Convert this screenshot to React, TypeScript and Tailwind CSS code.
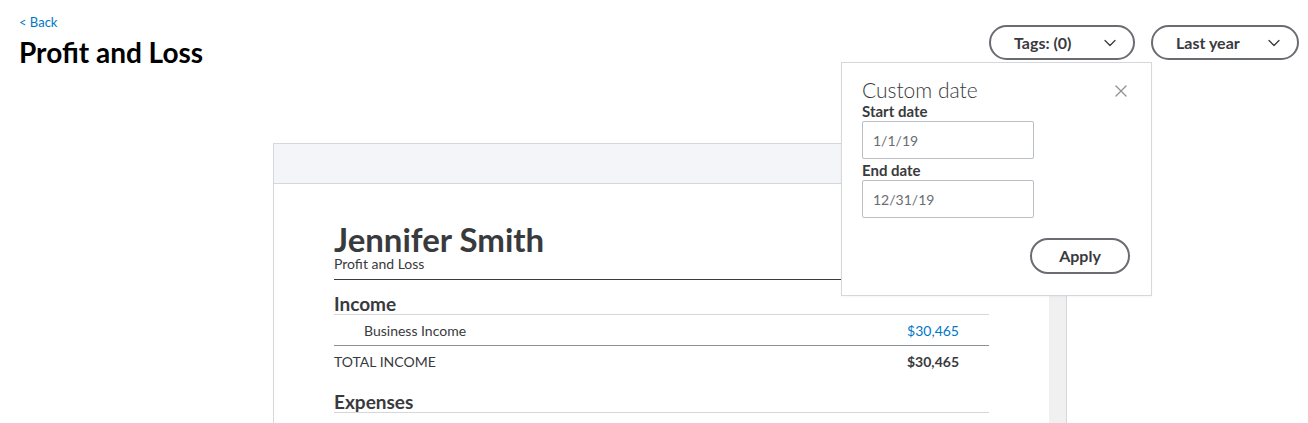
import { ChevronDown, X } from 'lucide-react'

const font = { fontFamily: 'Lato, "Noto Sans", sans-serif' }

function PillButton({ label, width }: { label: string; width: string }) {
  return (
    <button
      className={`flex h-[35px] items-center justify-between rounded-full border-2 border-[#6b6c72] bg-white pl-[23px] pr-[13px] text-[16px] font-bold text-[#393a3d] ${width}`}
    >
      <span>{label}</span>
      <ChevronDown size={20} strokeWidth={1.5} className="text-[#393a3d]" />
    </button>
  )
}

function Row({ label, amount, indent, total }: { label: string; amount: string; indent?: boolean; total?: boolean }) {
  return (
    <div className="flex h-[30px] items-center justify-between pr-[30px] text-[14px]">
      <span className={`${indent ? 'pl-[30px]' : ''} text-[#393a3d]`}>{label}</span>
      <span className={total ? 'font-bold text-[#393a3d]' : 'text-[#0077c5]'}>{amount}</span>
    </div>
  )
}

export default function App() {
  return (
    <div className="relative h-[423px] w-[1308px] overflow-hidden bg-white" style={font}>
      {/* header */}
      <div className="flex items-start justify-between pl-[19px] pr-[9px] pt-[13px]">
        <div>
          <a className="block text-[13px] leading-[18px] text-[#0077c5]">&lt; Back</a>
          <h1 className="mt-[4px] text-[28px] font-bold leading-[34px] text-black">Profit and Loss</h1>
        </div>
        <div className="mt-[12px] flex gap-[16px]">
          <PillButton label="Tags: (0)" width="w-[146px]" />
          <PillButton label="Last year" width="w-[148px]" />
        </div>
      </div>

      {/* report card */}
      <div className="ml-[273px] mt-[74px] w-[794px] border border-[#d4d7dc]">
        <div className="h-[40px] border-b border-[#d4d7dc] bg-[#f4f5f8]" />
        <div className="flex">
          <div className="flex-1 px-[60px] pt-[37px]">
            <div className="text-[33px] font-bold leading-[36px] text-[#393a3d]">Jennifer Smith</div>
            <div className="flex items-end justify-between border-b border-[#393a3d] pb-[8px] text-[14px] leading-[14px] text-[#393a3d]">
              <span>Profit and Loss</span>
              <span>Jan 01 - Dec 31, 2019</span>
            </div>
            <div className="mt-[14px] border-b border-[#d4d7dc] text-[19px] font-bold leading-[20px] text-[#393a3d]">Income</div>
            <div className="border-b border-[#8d9096]">
              <Row label="Business Income" amount="$30,465" indent />
            </div>
            <Row label="TOTAL INCOME" amount="$30,465" total />
            <div className="mt-[16px] border-b border-[#d4d7dc] text-[19px] font-bold leading-[20px] text-[#393a3d]">Expenses</div>
            <Row label="Advertising" amount="$400" indent />
          </div>
          <div className="w-[17px] bg-[#f0f0f0]" />
        </div>
      </div>

      {/* custom date popover */}
      <div className="absolute left-[841px] top-[62px] h-[234px] w-[311px] border border-[#d4d7dc] bg-white px-[20px] pt-[15px] shadow-[0_1px_2px_rgba(0,0,0,0.04)]">
        <div className="flex items-start justify-between">
          <div className="text-[21px] font-light leading-[24px] text-[#393a3d]">Custom date</div>
          <X size={20} strokeWidth={1.5} className="mt-[3px] text-[#8d9096]" />
        </div>
        <label className="block text-[15px] font-bold leading-[18px] text-[#393a3d]">Start date</label>
        <div className="mt-[1px] flex h-[38px] w-[172px] items-center rounded-[2px] border border-[#babec5] px-[10px] text-[14px] text-[#6b6c72]">
          1/1/19
        </div>
        <label className="mt-[2px] block text-[15px] font-bold leading-[18px] text-[#393a3d]">End date</label>
        <div className="mt-[1px] flex h-[38px] w-[172px] items-center rounded-[2px] border border-[#babec5] px-[10px] text-[14px] text-[#6b6c72]">
          12/31/19
        </div>
        <div className="mt-[20px] flex justify-end pr-[1px]">
          <button className="h-[36px] w-[100px] rounded-full border-2 border-[#6b6c72] text-[16px] font-bold text-[#393a3d]">
            Apply
          </button>
        </div>
      </div>
    </div>
  )
}
